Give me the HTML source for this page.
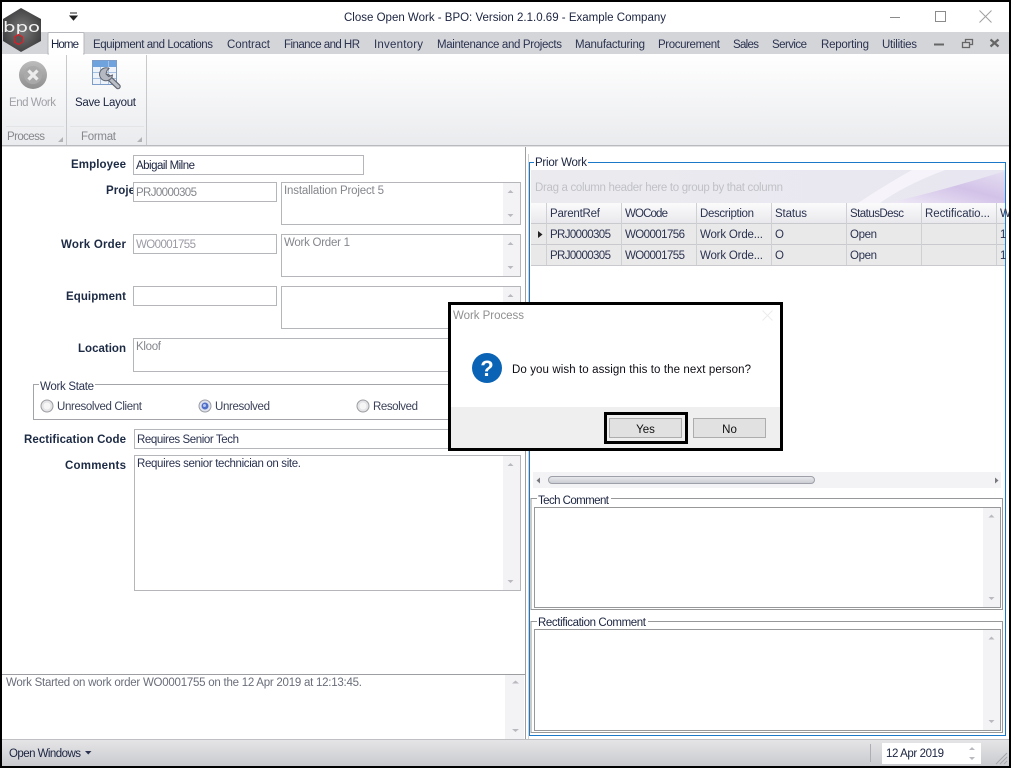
<!DOCTYPE html>
<html lang="en"><head><meta charset="utf-8"><title>Close Open Work - BPO</title>
<style>
html,body{margin:0;padding:0;background:#fff;width:1011px;height:768px;overflow:hidden}
svg{display:block}
text{font-family:"Liberation Sans",sans-serif;font-size:11.5px;fill:#1b2440;white-space:pre}
.g{fill:#84868c}
.b{font-weight:bold;fill:#1c2a44}
.f{fill:#fff;stroke:#b4b6ba}
.sb{fill:#f3f3f5}
.a{fill:#b9bac0}
.l{fill:none;stroke:#9a9c9e}
.w{fill:none;stroke:#96989a;stroke-width:1}
</style></head><body>
<svg width="1011" height="768" viewBox="0 0 1011 768" xmlns="http://www.w3.org/2000/svg">
<defs>
<linearGradient id="rib" x1="0" y1="0" x2="0" y2="1"><stop offset="0" stop-color="#fff"/><stop offset="1" stop-color="#eaebee"/></linearGradient>
<linearGradient id="st" x1="0" y1="0" x2="0" y2="1"><stop offset="0" stop-color="#e6e6e9"/><stop offset="1" stop-color="#c9cace"/></linearGradient>
<linearGradient id="hd" x1="0" y1="0" x2="0" y2="1"><stop offset="0" stop-color="#fbfbfc"/><stop offset="1" stop-color="#e9e9ed"/></linearGradient>
<linearGradient id="gp" x1="0" y1="0" x2="1" y2="0"><stop offset="0" stop-color="#ebebef"/><stop offset="1" stop-color="#e8e6f0"/></linearGradient>
<linearGradient id="sw" x1="0" y1="1" x2="1" y2="0"><stop offset="0" stop-color="#efeaf6"/><stop offset=".55" stop-color="#d2c2e8"/><stop offset="1" stop-color="#e6e0f2"/></linearGradient>
<linearGradient id="end" x1="0" y1="0" x2="0" y2="1"><stop offset="0" stop-color="#bcbcbc"/><stop offset="1" stop-color="#8f8f8f"/></linearGradient>
<linearGradient id="th" x1="0" y1="0" x2="0" y2="1"><stop offset="0" stop-color="#e9eaee"/><stop offset="1" stop-color="#c9cbd2"/></linearGradient>
<radialGradient id="hex" cx=".5" cy=".5" r=".6"><stop offset="0" stop-color="#7a7a7a"/><stop offset="1" stop-color="#39393b"/></radialGradient>
</defs>

<!-- title bar -->
<rect x="0" y="0" width="1011" height="768" fill="#fff"/>
<text x="344" y="21" textLength="322" lengthAdjust="spacing">Close Open Work - BPO: Version 2.1.0.69 - Example Company</text>
<path d="M70 13h7M70 16h7l-3.500 4z" fill="#222" stroke="#222" stroke-width="1"/>
<path d="M890 17.500h10" stroke="#8b8b8b"/>
<rect x="935.500" y="11.500" width="10" height="10" fill="none" stroke="#8b8b8b"/>
<path d="M979.500 10.500l12 12M991.500 10.500l-12 12" stroke="#a0a0a0"/>

<!-- tab row -->
<rect x="2" y="32" width="1007" height="22" fill="#d4d5d9"/>
<text x="93" y="48" textLength="120" lengthAdjust="spacing" style="fill:#2b3350">Equipment and Locations</text>
<text x="227" y="48" textLength="43" lengthAdjust="spacing" style="fill:#2b3350">Contract</text>
<text x="284" y="48" textLength="76" lengthAdjust="spacing" style="fill:#2b3350">Finance and HR</text>
<text x="374" y="48" textLength="49" lengthAdjust="spacing" style="fill:#2b3350">Inventory</text>
<text x="437" y="48" textLength="125" lengthAdjust="spacing" style="fill:#2b3350">Maintenance and Projects</text>
<text x="575" y="48" textLength="70" lengthAdjust="spacing" style="fill:#2b3350">Manufacturing</text>
<text x="658" y="48" textLength="62" lengthAdjust="spacing" style="fill:#2b3350">Procurement</text>
<text x="733" y="48" textLength="26" lengthAdjust="spacing" style="fill:#2b3350">Sales</text>
<text x="772" y="48" textLength="35" lengthAdjust="spacing" style="fill:#2b3350">Service</text>
<text x="821" y="48" textLength="48" lengthAdjust="spacing" style="fill:#2b3350">Reporting</text>
<text x="882" y="48" textLength="35" lengthAdjust="spacing" style="fill:#2b3350">Utilities</text>
<path d="M934 44.500h10" stroke="#666" stroke-width="2"/>
<path d="M962.500 42.500h7v5h-7zM965.500 42v-2.500h7v5h-3" fill="none" stroke="#666" stroke-width="1.300"/>
<path d="M990.500 39.500l8 7M998.500 39.500l-8 7" stroke="#666" stroke-width="2.200"/>

<!-- ribbon -->
<rect x="2" y="54" width="1007" height="91" fill="url(#rib)"/>
<path d="M2 145.500h1007" stroke="#b9babd"/><path d="M2 146.500h1007" stroke="#e2e2e4"/>
<path d="M66.500 55v90M146.500 55v90" stroke="#c8c9cc"/>
<path d="M6 126.500h58M70 126.500h74" stroke="#e4e4e6"/>
<path d="M48 54v-20.500q0-1 1-1h34q1 0 1 1V54z" fill="#fff" stroke="#b6b8bd"/>
<rect x="49" y="53" width="34" height="2" fill="#fff"/>
<text x="51" y="48" textLength="28" lengthAdjust="spacing">Home</text>

<circle cx="33" cy="75" r="14" fill="url(#end)"/>
<circle cx="33" cy="75" r="9" fill="#a9a9a9"/>
<path d="M28.500 70.500l9 9M37.500 70.500l-9 9" stroke="#ececec" stroke-width="3.200"/>
<text x="9" y="106" textLength="47" lengthAdjust="spacing" class="g" style="fill:#a0a1a6">End Work</text>
<text x="7" y="140" textLength="38" lengthAdjust="spacing" style="fill:#85878c">Process</text>
<path d="M63 137v5h-5z" fill="#b2b3b7"/>

<rect x="92.500" y="60.500" width="24" height="24" fill="#eef3fa" stroke="#7d9cc8"/>
<rect x="93" y="61" width="23" height="6" fill="#6ea3dd"/>
<path d="M100.500 67v17M108.500 61v23M93 72.500h23M93 78.500h23" stroke="#a8c0e0"/>
<path d="M107.500 76.500l10.500 10" stroke="#5f646e" stroke-width="5.500" stroke-linecap="round"/>
<path d="M107.500 76.500l10.500 10" stroke="#b9bec7" stroke-width="3.200" stroke-linecap="round"/>
<path d="M109 68.500a6.500 6.500 0 1 0 3.500 6.500l-3.800 1.500-2.700-2.500 1-3.500z" fill="#b4b9c2" stroke="#5f646e" stroke-width="1"/>
<text x="75" y="106" textLength="61" lengthAdjust="spacing">Save Layout</text>
<text x="81" y="140" textLength="35" lengthAdjust="spacing" style="fill:#85878c">Format</text>
<path d="M142 137v5h-5z" fill="#b2b3b7"/>

<!-- logo -->
<path d="M21 8L41 19V41L21 52L3 41V19z" fill="url(#hex)"/>
<text x="3" y="32" textLength="37" lengthAdjust="spacingAndGlyphs" style="font-size:14px;fill:#f2f2f2;font-family:'DejaVu Sans',sans-serif">bpo</text>
<path d="M18.500 34.500l4 2.500v5l-4 2.500-4-2.500v-5z" fill="#555" stroke="#e01c24" stroke-width="1.200"/>

<!-- left form -->
<path d="M525.500 147v592" stroke="#9c9ea2"/>
<text x="126" y="168" text-anchor="end" class="b" textLength="55" lengthAdjust="spacing">Employee</text>
<rect x="133.500" y="155.500" width="230" height="19" class="f"/>
<text x="136" y="169" textLength="59" lengthAdjust="spacing">Abigail Milne</text>

<text x="106" y="194" class="b" textLength="29" lengthAdjust="spacing">Proje</text>
<rect x="133.500" y="182.500" width="143" height="19" class="f"/>
<text x="136" y="196" class="g" textLength="61" lengthAdjust="spacing">PRJ0000305</text>
<rect x="281.500" y="182.500" width="239" height="42" class="f"/>
<rect x="503" y="183" width="17" height="41" class="sb"/>
<text x="284" y="194" class="g" textLength="100" lengthAdjust="spacing">Installation Project 5</text>
<path d="M507.500 193l3-3 3 3zM507.500 214l3 3 3-3z" class="a"/>

<text x="126" y="248" text-anchor="end" class="b" textLength="65" lengthAdjust="spacing">Work Order</text>
<rect x="133.500" y="234.500" width="143" height="19" class="f"/>
<text x="136" y="248" class="g" textLength="60" lengthAdjust="spacing" style="fill:#9a9aa4">WO0001755</text>
<rect x="281.500" y="234.500" width="239" height="42" class="f"/>
<rect x="503" y="235" width="17" height="41" class="sb"/>
<text x="284" y="246" class="g" textLength="66" lengthAdjust="spacing">Work Order 1</text>
<path d="M507.500 245l3-3 3 3zM507.500 266l3 3 3-3z" class="a"/>

<text x="126" y="300" text-anchor="end" class="b" textLength="60" lengthAdjust="spacing">Equipment</text>
<rect x="133.500" y="286.500" width="143" height="19" class="f"/>
<rect x="281.500" y="286.500" width="239" height="42" class="f"/>
<rect x="503" y="287" width="17" height="41" class="sb"/>
<path d="M507.500 297l3-3 3 3z" class="a"/>

<text x="126" y="352" text-anchor="end" class="b" textLength="48" lengthAdjust="spacing">Location</text>
<rect x="133.500" y="338.500" width="387" height="33" class="f"/>
<text x="136" y="350" class="g" textLength="25" lengthAdjust="spacing">Kloof</text>

<path d="M39 384.500h-5.500v35h487v-35H95" fill="none" stroke="#a2a4a8"/>
<text x="40" y="390" textLength="54" lengthAdjust="spacing" style="fill:#2b3350">Work State</text>
<g>
<circle cx="47" cy="406" r="6" fill="#e4e4e6" stroke="#9b9da2"/><circle cx="47" cy="406" r="3.500" fill="#f6f6f7"/>
<text x="57" y="410" textLength="85" lengthAdjust="spacing" style="fill:#3b4258">Unresolved Client</text>
<circle cx="205" cy="406" r="6" fill="#dfe3ee" stroke="#9b9da2"/><circle cx="205" cy="406" r="3.500" fill="#5070c8"/><circle cx="204.500" cy="405.500" r="1.500" fill="#b6c6ee"/>
<text x="215" y="410" textLength="55" lengthAdjust="spacing" style="fill:#3b4258">Unresolved</text>
<circle cx="363" cy="406" r="6" fill="#e4e4e6" stroke="#9b9da2"/><circle cx="363" cy="406" r="3.500" fill="#f6f6f7"/>
<text x="373" y="410" textLength="45" lengthAdjust="spacing" style="fill:#3b4258">Resolved</text>
</g>

<text x="126" y="443" text-anchor="end" class="b" textLength="102" lengthAdjust="spacing">Rectification Code</text>
<rect x="134.500" y="429.500" width="386" height="19" class="f"/>
<text x="137" y="443" textLength="102" lengthAdjust="spacing" style="fill:#2b3350">Requires Senior Tech</text>

<text x="126" y="469" text-anchor="end" class="b" textLength="61" lengthAdjust="spacing">Comments</text>
<rect x="134.500" y="455.500" width="386" height="135" class="f"/>
<rect x="503" y="456" width="17" height="134" class="sb"/>
<text x="137" y="467" textLength="164" lengthAdjust="spacing" style="fill:#2b3350">Requires senior technician on site.</text>
<path d="M507.500 466l3-3 3 3zM507.500 580l3 3 3-3z" class="a"/>

<!-- log -->
<path d="M2 674.500h523" stroke="#9c9ea2"/>
<rect x="505" y="675" width="19" height="64" class="sb"/>
<text x="6" y="686" textLength="356" lengthAdjust="spacing" style="fill:#6a6e7a">Work Started on work order WO0001755 on the 12 Apr 2019 at 12:13:45.</text>
<path d="M512 683.500h7l-3.500-3z" class="a"/>
<path d="M512 729h7l-3.500 3z" class="a"/>

<!-- right panel -->
<path d="M534 162.500h-4.500v573h476v-573H588" fill="none" stroke="#1b78c8"/>
<path d="M528.500 154v585" stroke="#cfd0d2"/>
<text x="535" y="166" textLength="52" lengthAdjust="spacing">Prior Work</text>

<rect x="531" y="170" width="474" height="33" fill="url(#gp)"/>
<path d="M858 203Q885 185 912 170H945Q905 185 880 203z" fill="#f6f4fa"/>
<path d="M888 203Q945 190 1005 171V203z" fill="url(#sw)"/>
<text x="535" y="191" textLength="248" lengthAdjust="spacing" style="fill:#c0c1c7">Drag a column header here to group by that column</text>

<rect x="531" y="203" width="474" height="20" fill="url(#hd)"/>
<rect x="531" y="224" width="474" height="41" fill="#e9e9ea"/>
<path d="M531 223.500h474M531 244.500h474M531 265.500h474" stroke="#c9cacd"/>
<path d="M546.500 203v62M621.500 203v62M696.500 203v62M771.500 203v62M846.500 203v62M921.500 203v62M996.500 203v62" stroke="#cfd0d4"/>
<text x="550" y="217" textLength="50" lengthAdjust="spacing" style="fill:#2b3350">ParentRef</text>
<text x="625" y="217" textLength="43" lengthAdjust="spacing" style="fill:#2b3350">WOCode</text>
<text x="700" y="217" textLength="54" lengthAdjust="spacing" style="fill:#2b3350">Description</text>
<text x="775" y="217" textLength="32" lengthAdjust="spacing" style="fill:#2b3350">Status</text>
<text x="850" y="217" textLength="54" lengthAdjust="spacing" style="fill:#2b3350">StatusDesc</text>
<text x="925" y="217" textLength="65" lengthAdjust="spacing" style="fill:#2b3350">Rectificatio...</text>
<text x="1000" y="217" style="fill:#2b3350">W</text>
<path d="M538 231l4.500 3.500-4.500 3.500z" fill="#222"/>
<text x="550" y="238" textLength="61" lengthAdjust="spacing" style="fill:#2b3350">PRJ0000305</text>
<text x="625" y="238" textLength="60" lengthAdjust="spacing" style="fill:#2b3350">WO0001756</text>
<text x="700" y="238" textLength="63" lengthAdjust="spacing" style="fill:#2b3350">Work Orde...</text>
<text x="775" y="238" style="fill:#2b3350">O</text>
<text x="850" y="238" textLength="27" lengthAdjust="spacing" style="fill:#2b3350">Open</text>
<text x="1000" y="238" style="fill:#2b3350">1</text>
<text x="550" y="259" textLength="61" lengthAdjust="spacing" style="fill:#2b3350">PRJ0000305</text>
<text x="625" y="259" textLength="60" lengthAdjust="spacing" style="fill:#2b3350">WO0001755</text>
<text x="700" y="259" textLength="63" lengthAdjust="spacing" style="fill:#2b3350">Work Orde...</text>
<text x="775" y="259" style="fill:#2b3350">O</text>
<text x="850" y="259" textLength="27" lengthAdjust="spacing" style="fill:#2b3350">Open</text>
<text x="1000" y="259" style="fill:#2b3350">1</text>

<!-- h scroll -->
<rect x="533" y="472" width="468" height="16" fill="#f3f3f5"/>
<rect x="548.500" y="476.500" width="266" height="7" rx="3.500" fill="url(#th)" stroke="#9da0a8"/>
<path d="M540 477.500v6l-3.500-3zM995 477.500v6l3.500-3z" fill="#77797f"/>

<!-- tech comment -->
<path d="M537 498.500h-6v111h471.500v-111H611" class="w"/>
<rect x="534.500" y="507.500" width="466" height="100" fill="#fff" stroke="#96989a"/>
<rect x="983" y="508" width="17" height="99" class="sb"/>
<text x="538" y="504" textLength="71" lengthAdjust="spacing">Tech Comment</text>
<path d="M988.500 517.500l3-3 3 3zM988.500 597l3 3 3-3z" class="a"/>

<!-- rect comment -->
<path d="M537 621.500h-6v111h471.500v-111H648" class="w"/>
<rect x="534.500" y="629.500" width="466" height="101" fill="#fff" stroke="#96989a"/>
<rect x="983" y="630" width="17" height="100" class="sb"/>
<text x="538" y="626" textLength="108" lengthAdjust="spacing">Rectification Comment</text>
<path d="M988.500 639.500l3-3 3 3zM988.500 720l3 3 3-3z" class="a"/>

<!-- status bar -->
<rect x="2" y="739" width="1007" height="27" fill="url(#st)"/>
<path d="M2 739.500h1007" stroke="#bfc0c3"/>
<text x="9" y="757" textLength="72" lengthAdjust="spacing">Open Windows</text>
<path d="M85 751h6.500l-3.250 3.500z" fill="#2b3350"/>
<path d="M870.500 744v18" stroke="#aeafb3"/>
<rect x="882" y="743" width="99" height="21" fill="#fff"/>
<text x="886" y="757" textLength="58" lengthAdjust="spacing">12 Apr 2019</text>
<path d="M969 750l3-3 3 3zM969 757l3 3 3-3z" class="a"/>
<path d="M996 764l11-11M1000 764l7-7M1004 764l3-3" stroke="#a5a6aa"/>

<!-- window border -->
<rect x="1" y="1" width="1009" height="766" fill="none" stroke="#000" stroke-width="2"/>

<!-- dialog -->
<rect x="449.500" y="303.500" width="332" height="146" fill="#fff" stroke="#000" stroke-width="3"/>
<rect x="451" y="407" width="329" height="41" fill="#efefef"/>
<text x="453" y="319" textLength="71" lengthAdjust="spacing" style="fill:#8f8f8f">Work Process</text>
<path d="M762.500 310.500l10 10M772.500 310.500l-10 10" stroke="#ececec"/>
<circle cx="487" cy="368" r="15" fill="#0b63b5"/>
<text x="487" y="376" text-anchor="middle" style="font-size:22px;font-weight:bold;fill:#fff">?</text>
<text x="512" y="373" textLength="239" lengthAdjust="spacing" style="fill:#0c0c14">Do you wish to assign this to the next person?</text>
<rect x="605.500" y="413.500" width="81" height="29" fill="none" stroke="#000" stroke-width="3"/>
<rect x="609.500" y="418.500" width="72" height="19" fill="#e1e1e1" stroke="#adadad"/>
<text x="645.500" y="433" text-anchor="middle" style="fill:#111">Yes</text>
<rect x="693.500" y="418.500" width="72" height="19" fill="#e1e1e1" stroke="#adadad"/>
<text x="729.500" y="433" text-anchor="middle" style="fill:#111">No</text>
</svg>
</body></html>
